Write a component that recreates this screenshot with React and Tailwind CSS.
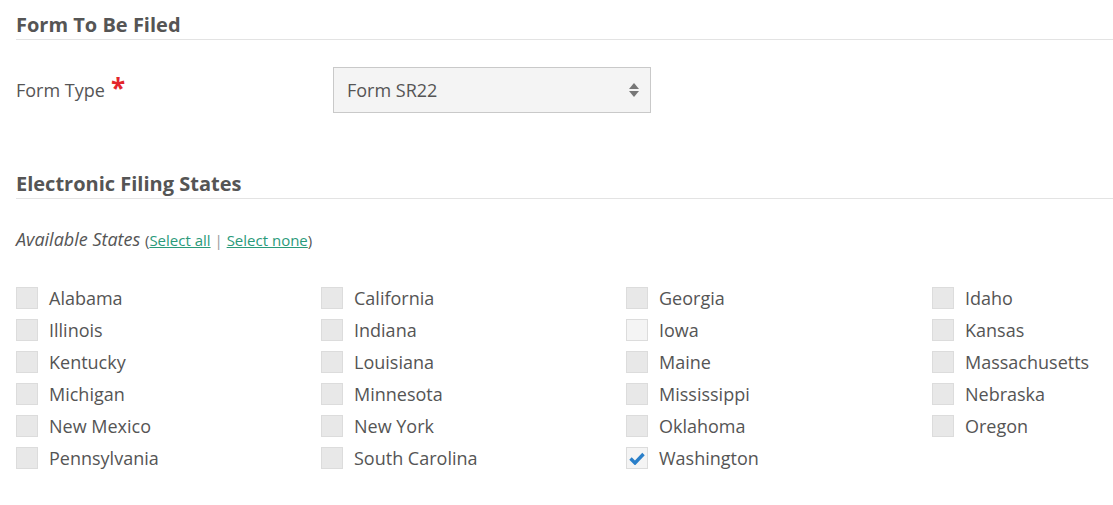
import React, { useState } from 'react';

const STATES = [
  'Alabama', 'California', 'Georgia', 'Idaho',
  'Illinois', 'Indiana', 'Iowa', 'Kansas',
  'Kentucky', 'Louisiana', 'Maine', 'Massachusetts',
  'Michigan', 'Minnesota', 'Mississippi', 'Nebraska',
  'New Mexico', 'New York', 'Oklahoma', 'Oregon',
  'Pennsylvania', 'South Carolina', 'Washington',
];

function StateCheckbox({ name, checked, hover, onToggle }) {
  return (
    <label className="flex items-center h-8 cursor-pointer">
      <span
        onClick={onToggle}
        className={`w-[22px] h-[22px] border border-[#dcdcdc] flex items-center justify-center ${
          checked || hover ? 'bg-[#f4f4f4]' : 'bg-[#e8e8e8]'
        }`}
      >
        {checked && (
          <svg width="16" height="13" viewBox="0 0 16 13">
            <path d="M1.5 6.5 L6 11 L14.5 2" fill="none" stroke="#2a7fc9" strokeWidth="3.4" />
          </svg>
        )}
      </span>
      <span className="ml-[11px] text-[18px] text-[#555]">{name}</span>
    </label>
  );
}

export default function App() {
  const [selected, setSelected] = useState(['Washington']);

  const toggle = (name) => {
    setSelected((s) => (s.includes(name) ? s.filter((n) => n !== name) : [...s, name]));
  };

  return (
    <div className="bg-white w-[1113px] h-[505px] pl-4 pt-[10px] text-[#555]" style={{ fontFamily: '"Open Sans", sans-serif' }}>
      {/* Form To Be Filed */}
      <h2 className="text-[20px] font-bold leading-[29px] border-b border-[#e3e3e3]">Form To Be Filed</h2>

      <div className="flex items-center mt-[27px]">
        <div className="w-[317px] text-[18px] flex items-center">
          Form Type <span className="ml-[6px] text-[#e3262b] text-[26px] font-bold leading-none -mt-[4px]">*</span>
        </div>
        <div className="w-[318px] h-[46px] bg-[#f4f4f4] border border-[#c9c9c9] flex items-center justify-between pl-[13px] pr-[10px]">
          <span className="text-[18px]">Form SR22</span>
          <svg width="12" height="18" viewBox="0 0 12 18">
            <path d="M6 2 L11 8 H1 Z" fill="#777" />
            <path d="M6 16 L11 10 H1 Z" fill="#777" />
          </svg>
        </div>
      </div>

      {/* Electronic Filing States */}
      <h2 className="text-[20px] font-bold leading-[29px] border-b border-[#e3e3e3] mt-[56px]">Electronic Filing States</h2>

      <p className="mt-[27px] text-[18px] leading-[26px]">
        <span className="italic">Available States</span>{' '}
        <span className="text-[15px]">
          (<a className="text-[#2a9a7a] underline" href="#">Select all</a>{' '}
          <span className="text-[#999]">|</span>{' '}
          <a className="text-[#2a9a7a] underline" href="#">Select none</a>)
        </span>
      </p>

      <div className="grid grid-cols-[305px_305px_306px_1fr] mt-[29px]">
        {STATES.map((s) => (
          <StateCheckbox
            key={s}
            name={s}
            checked={selected.includes(s)}
            hover={s === 'Iowa'}
            onToggle={() => toggle(s)}
          />
        ))}
      </div>
    </div>
  );
}
